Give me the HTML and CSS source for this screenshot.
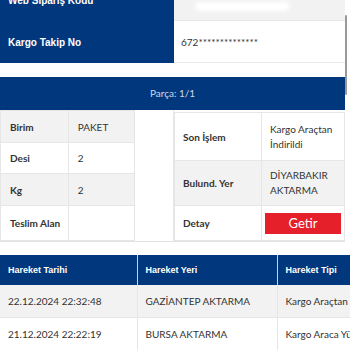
FILE: index.html
```html
<!DOCTYPE html>
<html lang="tr">
<head>
  <meta charset="UTF-8" />
  <title>Kargo Takip</title>
  <link rel="stylesheet" href="styles.css">
</head>
<body>

  <div class="page">
    <table class="summary">
      <tr class="row-gray">
        <th>Web Sipariş Kodu</th>
        <td>7.<span class="masked"></span></td>
      </tr>
      <tr>
        <th>Kargo Takip No</th>
        <td>672**************</td>
      </tr>
    </table>

    <div class="part-title">Parça: 1/1</div>

    <div class="parts">
      <table class="info info-left">
        <tr class="row-gray"><th>Birim</th><td>PAKET</td></tr>
        <tr><th>Desi</th><td>2</td></tr>
        <tr class="row-gray"><th>Kg</th><td>2</td></tr>
        <tr class="row-last"><th>Teslim Alan</th><td></td></tr>
      </table>
      <div class="parts-gap"></div>
      <table class="info info-right">
        <tr class="row-tall"><th>Son İşlem</th><td>Kargo Araçtan İndirildi</td></tr>
        <tr class="row-gray row-mid"><th>Bulund. Yer</th><td>DİYARBAKIR AKTARMA</td></tr>
        <tr class="row-last"><th>Detay</th><td><button class="btn-red">Getir</button></td></tr>
      </table>
    </div>

    <table class="moves">
      <tr>
        <th class="col-date">Hareket Tarihi</th>
        <th class="col-place">Hareket Yeri</th>
        <th>Hareket Tipi</th>
      </tr>
      <tr class="row-gray">
        <td>22.12.2024 22:32:48</td>
        <td>GAZİANTEP AKTARMA</td>
        <td>Kargo Araçtan İndirildi</td>
      </tr>
      <tr>
        <td>21.12.2024 22:22:19</td>
        <td>BURSA AKTARMA</td>
        <td>Kargo Araca Yüklendi</td>
      </tr>
    </table>

    <div class="scrollbar"></div>
  </div>

</body>
</html>
```

FILE: styles.css
```css
html, body {
  margin: 0;
  overflow: hidden;
  background: white;
}

body {
  font-family: 'Lato', sans-serif;
  font-size: 10px;
  color: #333;
}

.page {
  position: relative;
  margin-top: -21px;
  width: 345px;
}

table {
  border-collapse: collapse;
}

.row-gray td,
.row-gray th {
  background: #f2f2f2;
}

/* top summary */
.summary {
  width: 345px;
}

.summary th {
  width: 174px;
  height: 42px;
  padding: 0 8px;
  box-sizing: border-box;
  background: #00377d !important;
  color: white;
  font-family: 'Liberation Sans', Arial, sans-serif;
  font-size: 10px;
  font-weight: bold;
  text-align: left;
}

.summary td {
  padding: 0 7px;
  box-shadow: inset 0 -1px 0 #e8e8e8;
}

.masked {
  display: inline-block;
  width: 95px;
  height: 9px;
  margin-left: 6px;
  background: white;
  border-radius: 5px;
  filter: blur(2px);
  vertical-align: -12px;
}

.part-title {
  margin-top: 14px;
  height: 33px;
  line-height: 33px;
  background: #00377d;
  color: #cdd9ea;
  text-align: center;
}

/* part details */
.parts {
  display: flex;
  border-bottom: 1px solid #e3e3e3;
}

.info th,
.info td {
  border: 1px solid #e6e6e6;
  text-align: left;
  vertical-align: middle;
  box-sizing: border-box;
}

.info th {
  font-weight: bold;
  white-space: nowrap;
}

.info-left {
  width: 135px;
}

.info-left th,
.info-left td {
  width: 68px;
  height: 31px;
  padding: 0 4px 0 9px;
}

.info-left .row-gray th {
  height: 32px;
}

.info-left .row-last th {
  height: 35px;
}

.parts-gap {
  width: 38px;
  border-right: 1px solid #e6e6e6;
}

.info-right {
  flex: 1;
  margin-top: 2px;
}

.info-right th {
  width: 87px;
  padding: 0 8px;
}

.info-right td {
  padding: 0 8px;
  line-height: 15px;
}

.info-right .row-tall th {
  height: 48px;
}

.info-right .row-mid th {
  height: 45px;
}

.info-right .row-last th {
  height: 35px;
}

.info-right .row-last td {
  padding: 0 3px;
}

.btn-red {
  display: block;
  width: 100%;
  height: 21px;
  padding: 0;
  border: none;
  background: #e5202a;
  color: white;
  font-family: 'Lato', sans-serif;
  font-size: 13px;
}

/* movements */
.moves {
  margin-top: 13px;
  width: 430px;
  white-space: nowrap;
}

.moves th {
  height: 30px;
  padding: 0 8px;
  background: #00377d;
  color: white;
  border-left: 1px solid #c9d3e2;
  font-family: 'Liberation Sans', Arial, sans-serif;
  font-size: 9px;
  font-weight: bold;
  text-align: left;
}

.moves th:first-child {
  border-left: none;
}

.moves .col-date {
  width: 137px;
  box-sizing: border-box;
}

.moves .col-place {
  width: 140px;
  box-sizing: border-box;
}

.moves td {
  height: 32px;
  padding: 0 8px;
  border: 1px solid #e6e6e6;
  border-top: none;
}

.moves td:first-child {
  border-left: none;
}

.scrollbar {
  position: absolute;
  top: 36px;
  right: -2px;
  width: 2px;
  height: 80px;
  background: #999;
  border-radius: 1px;
}
```
